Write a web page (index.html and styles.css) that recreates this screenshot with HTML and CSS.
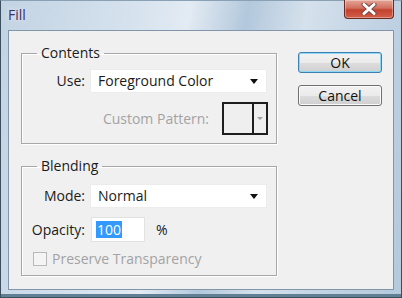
FILE: index.html
```html
<!DOCTYPE html>
<html lang="en">
  <head>
    <meta charset="UTF-8" />
    <title>Fill</title>
    <link rel="stylesheet" href="styles.css">
  </head>
  <body>
    <div class="window">
      <!-- Glass title bar -->
      <div class="titlebar">
        <span class="title">Fill</span>
        <div class="close">
          <svg width="20" height="12" viewBox="0 0 20 12">
            <path d="M5 1.5 L15 10.5 M15 1.5 L5 10.5" stroke="#7b4a44" stroke-width="5" stroke-linecap="round" />
            <path d="M5 1.5 L15 10.5 M15 1.5 L5 10.5" stroke="#ffffff" stroke-width="3" stroke-linecap="round" />
          </svg>
        </div>
      </div>
      <div class="client">
        <div class="groups">
          <fieldset class="group contents">
            <legend>Contents</legend>
            <div class="row">
              <label>Use:</label>
              <div class="select">Foreground Color<span class="arrow"></span></div>
            </div>
            <div class="pattern-row">
              <span class="disabled">Custom Pattern:</span>
              <div class="pattern">
                <div class="swatch"></div>
                <div class="pattern-drop"><span class="small-arrow"></span></div>
              </div>
            </div>
          </fieldset>
          <fieldset class="group blending">
            <legend>Blending</legend>
            <div class="row">
              <label>Mode:</label>
              <div class="select">Normal<span class="arrow"></span></div>
            </div>
            <div class="row">
              <label>Opacity:</label>
              <div class="opacity">
                <div class="input"><span class="selected">100</span></div>
                <span class="unit">%</span>
              </div>
            </div>
            <div class="check-row">
              <span class="checkbox"></span>
              <span class="disabled">Preserve Transparency</span>
            </div>
          </fieldset>
        </div>
        <div class="buttons">
          <button class="btn default">OK</button>
          <button class="btn">Cancel</button>
        </div>
      </div>
    </div>
  </body>
</html>
```

FILE: styles.css
```css
* {
  box-sizing: border-box;
  margin: 0;
  padding: 0;
}
body {
  font-family: "Open Sans", "Noto Sans", sans-serif;
  font-size: 14px;
  color: #1b1b1b;
  background: #9fb5c9;
}
/* Window frame */
.window {
  width: 402px;
  height: 298px;
  padding: 0 7px 8px 7px;
  background: linear-gradient(100deg, #c2d3e3 0%, #d6e2ee 30%, #e3ebf3 42%, #b3c8dc 55%, #d5e1ec 68%, #c0d2e3 85%, #b4c9dc 100%);
  border: 1px solid #3d4f5f;
  border-top-color: #8aa0b4;
  box-shadow: inset 0 -3px 0 #5f7f92;
}
.titlebar {
  height: 29px;
  display: flex;
  justify-content: space-between;
  align-items: flex-start;
}
.title {
  margin-top: 5px;
  font-size: 14px;
  line-height: 18px;
  color: #3d2f63;
  text-shadow: 0 0 6px rgba(255, 255, 255, 0.9);
}
.close {
  width: 50px;
  height: 19px;
  margin-top: -1px;
  display: flex;
  align-items: center;
  justify-content: center;
  border: 1px solid #6a2a22;
  border-top: none;
  border-radius: 0 0 4px 4px;
  background: linear-gradient(#e3a597 0%, #d2705f 45%, #c1412d 55%, #d2604a 100%);
  box-shadow: inset 0 0 0 1px rgba(255, 255, 255, 0.35);
}
/* Dialog client area */
.client {
  height: 260px;
  display: flex;
  background: #f0f0f0;
  border: 1px solid #8196aa;
}
.groups {
  width: 268px;
  padding: 13px 0 0 12px;
  display: flex;
  flex-direction: column;
  gap: 13px;
}
.group {
  width: 256px;
  border: 1px solid #a7a7a7;
  box-shadow: inset 1px 1px 0 #fff, 1px 1px 0 #fff;
}
.group legend {
  margin-left: 15px;
  padding: 0 4px;
  line-height: 18px;
}
.contents {
  padding: 7px 0 8px;
}
.blending {
  padding: 9px 0 7px;
}
.row {
  display: grid;
  grid-template-columns: 63px 177px;
  column-gap: 5px;
  align-items: center;
  margin-bottom: 9px;
  line-height: 18px;
}
.row label {
  text-align: right;
}
.select {
  height: 24px;
  background: #fff;
  border: 1px solid #ececec;
  padding: 0 8px 0 7px;
  display: flex;
  align-items: center;
  justify-content: space-between;
}
.arrow {
  width: 0;
  height: 0;
  border-left: 4px solid transparent;
  border-right: 4px solid transparent;
  border-top: 5px solid #111;
}
.pattern-row {
  display: flex;
  justify-content: flex-end;
  align-items: center;
  gap: 13px;
  padding-right: 8px;
  line-height: 18px;
}
.disabled {
  color: #a3a3a3;
}
.pattern {
  width: 46px;
  height: 33px;
  display: flex;
  border: 2px solid #1e1e1e;
  background: #efefef;
}
.swatch {
  flex: 1;
  border-right: 2px solid #1e1e1e;
}
.pattern-drop {
  width: 12px;
  display: flex;
  align-items: center;
  justify-content: center;
}
.small-arrow {
  border-left: 3px solid transparent;
  border-right: 3px solid transparent;
  border-top: 3px solid #a0a0a0;
}
.opacity {
  display: flex;
  align-items: center;
}
.input {
  width: 54px;
  height: 25px;
  margin-left: 1px;
  background: #fff;
  border: 1px solid #e2e2e2;
  padding-left: 4px;
  display: flex;
  align-items: center;
}
.selected {
  background: #3399ff;
  color: #fff;
  padding: 0 1px;
  line-height: 17px;
}
.unit {
  margin-left: 11px;
}
.check-row {
  display: flex;
  align-items: center;
  gap: 5px;
  padding-left: 11px;
  margin-top: -1px;
  line-height: 18px;
}
.checkbox {
  width: 14px;
  height: 14px;
  border: 1px solid #b9b9b9;
  background: #f4f4f4;
}
/* Push buttons */
.buttons {
  margin: 21px 0 0 21px;
  display: flex;
  flex-direction: column;
  gap: 12px;
}
.btn {
  width: 84px;
  height: 21px;
  font-family: inherit;
  font-size: 14px;
  line-height: 17px;
  color: #111;
  border: 1px solid #707070;
  border-radius: 3px;
  background: linear-gradient(#f2f2f2 0%, #ebebeb 50%, #dddddd 51%, #cfcfcf 100%);
  box-shadow: inset 0 0 0 1px #fbfbfb;
}
.btn.default {
  border-color: #3c7fb1;
  box-shadow: inset 0 0 0 1px #8ed7f5;
}
```
